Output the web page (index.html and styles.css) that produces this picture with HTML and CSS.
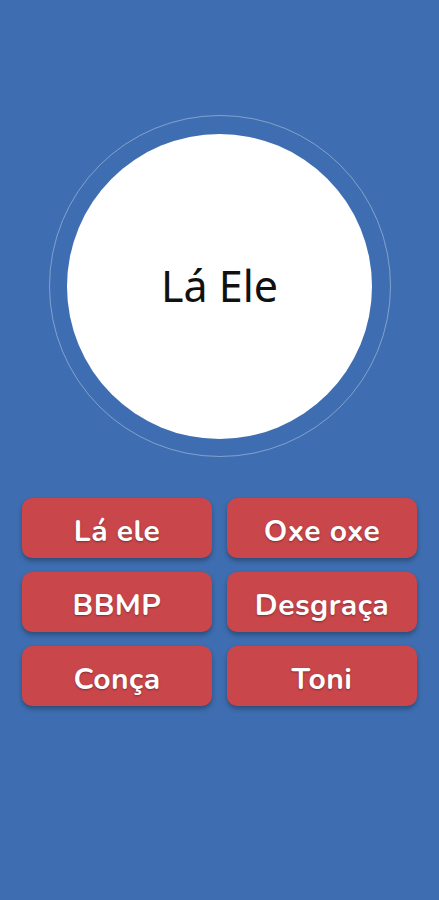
FILE: index.html
```html
<!DOCTYPE html>
<html lang="pt">
<head>
    <meta charset="UTF-8">
    <meta name="viewport" content="width=device-width, initial-scale=1.0">
    <title>Lá Ele</title>
    <link rel="stylesheet" href="styles.css">
</head>
<body>
    <div class="screen">
        <div class="ring">
            <div class="disc">Lá Ele</div>
        </div>

        <div class="sounds">
            <button class="sound">Lá ele</button>
            <button class="sound">Oxe oxe</button>
            <button class="sound">BBMP</button>
            <button class="sound">Desgraça</button>
            <button class="sound">Conça</button>
            <button class="sound">Toni</button>
        </div>
    </div>
</body>
</html>
```

FILE: styles.css
```css
html, body {
    margin: 0;
    padding: 0;
    height: 100%;
}

body {
    background-color: #3e6eb1;
    font-family: "Noto Sans", Arial, sans-serif;
}

.screen {
    padding-top: 115px;
}

.ring {
    width: 340px;
    height: 340px;
    margin: 0 auto;
    border: 1px solid rgba(255, 255, 255, 0.35);
    border-radius: 50%;
    display: flex;
    align-items: center;
    justify-content: center;
}

.disc {
    width: 305px;
    height: 305px;
    border-radius: 50%;
    background-color: #ffffff;
    color: #111;
    font-size: 43px;
    padding-bottom: 2px;
    box-sizing: border-box;
    display: flex;
    align-items: center;
    justify-content: center;
}

.sounds {
    display: grid;
    grid-template-columns: 190px 190px;
    column-gap: 15px;
    row-gap: 14px;
    justify-content: center;
    margin-top: 41px;
}

.sound {
    height: 60px;
    padding: 7px 0 0;
    border: none;
    border-radius: 10px;
    background-color: #c9464b;
    color: #fff;
    font-family: "Nunito", "Lato", sans-serif;
    font-weight: bold;
    font-size: 30px;
    letter-spacing: 0.5px;
    text-shadow: 0 1px 2px rgba(0, 0, 0, 0.35);
    box-shadow: 0 3px 5px rgba(0, 0, 0, 0.3);
    cursor: pointer;
}
```
